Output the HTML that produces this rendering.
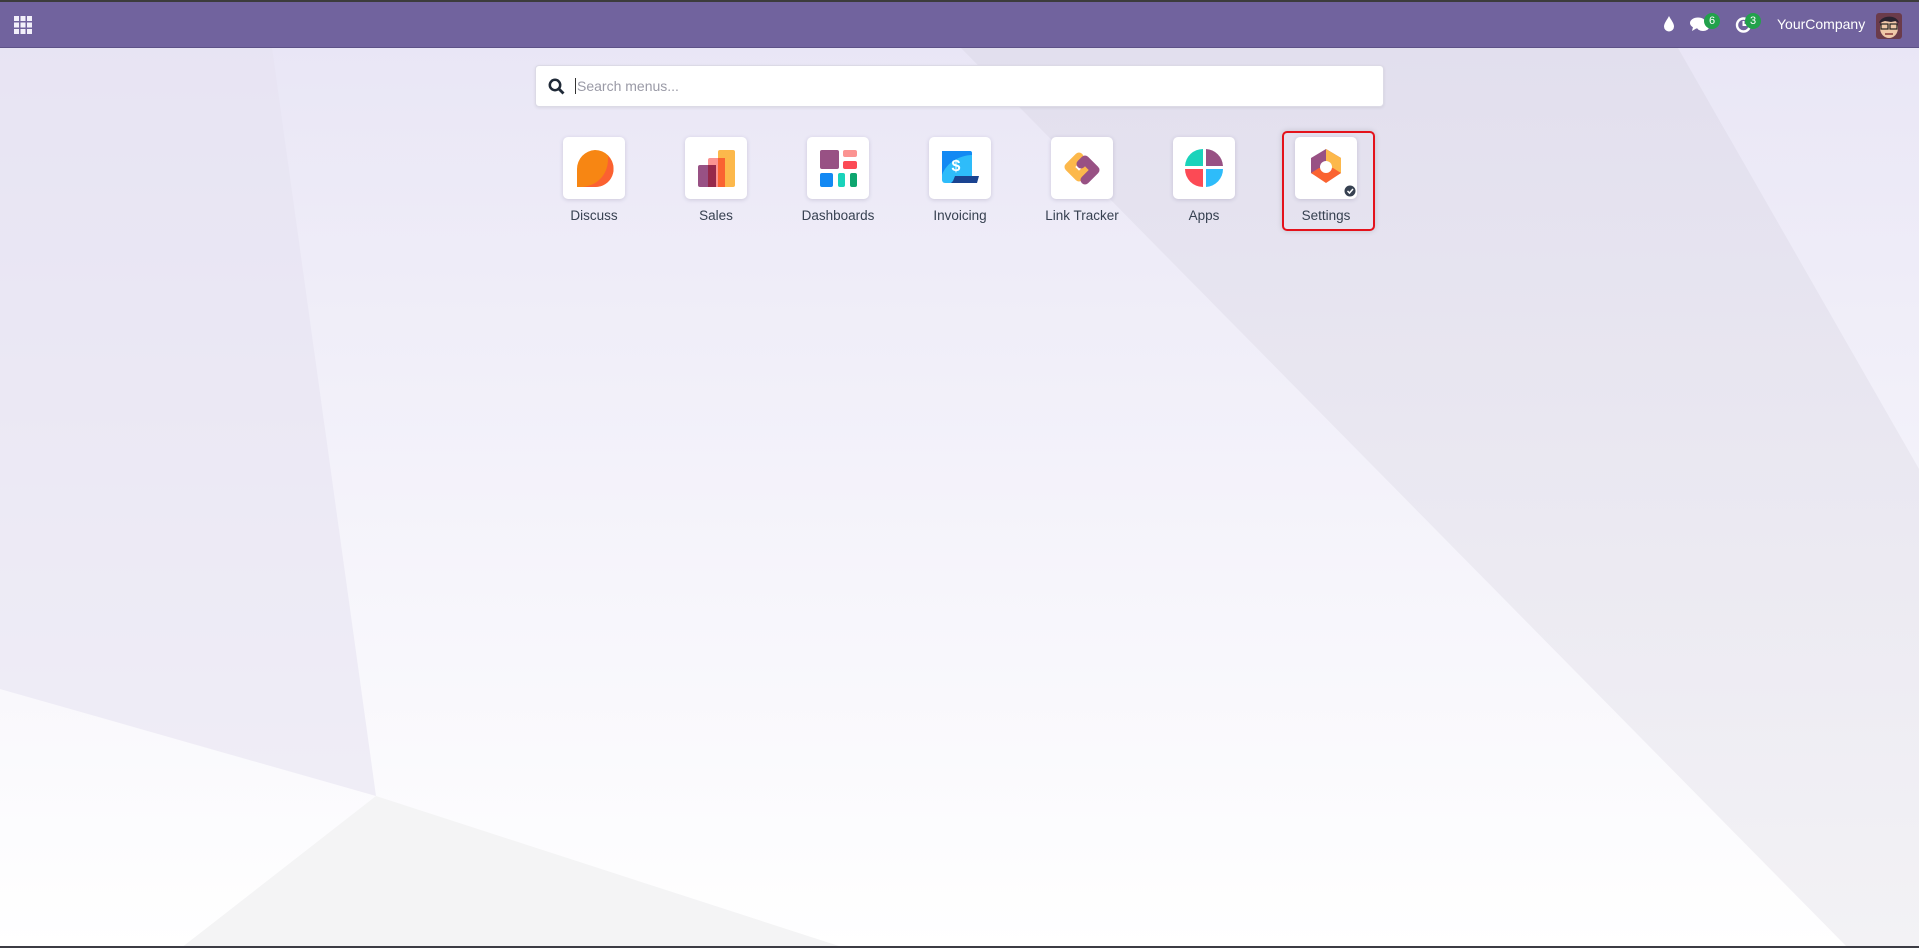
<!DOCTYPE html>
<html><head><meta charset="utf-8"><style>
*{margin:0;padding:0;box-sizing:border-box}
body{width:1919px;height:948px;overflow:hidden;font-family:"Liberation Sans",sans-serif;position:relative;background:#fff}
#bg{position:absolute;left:0;top:0}
.nav{position:absolute;left:0;top:0;width:1919px;height:48px;background:#71639e;border-top:2px solid #3c3c3c;border-bottom:1px solid #5d5287}
.search{position:absolute;left:535px;top:65px;width:849px;height:42px;background:#fff;border:1px solid #dcdae6;border-radius:4px;box-shadow:0 1px 3px rgba(0,0,0,.08)}
.search span{position:absolute;left:39px;top:12px;font-size:14px;color:#9a9aa6;border-left:1px solid #333;padding-left:1px}
.tile{position:absolute;top:137px;width:62px;height:62px;background:#fff;border-radius:5px;box-shadow:0 1px 4px rgba(60,50,100,.18)}
.lab{position:absolute;top:208px;width:122px;text-align:center;font-size:13.5px;color:#374151}
.bad{position:absolute;top:11px;height:16px;min-width:16px;border-radius:8px;background:#22a14b;color:#fff;font-size:11px;text-align:center;line-height:16px}
</style></head><body>
<svg id="bg" width="1919" height="948" viewBox="0 0 1919 948">
<defs><linearGradient id="g" x1="0" y1="0" x2="0" y2="1"><stop offset="0" stop-color="#e8e5f5"/><stop offset="1" stop-color="#ffffff"/></linearGradient>
<linearGradient id="g2" x1="0" y1="0" x2="0" y2="1"><stop offset="0" stop-color="#e2dfee"/><stop offset="1" stop-color="#f3f2f5"/></linearGradient></defs>
<rect width="1919" height="948" fill="url(#g)"/>
<polygon points="0,48 272,48 376,796 0,689" fill="#e5e2f1" opacity=".55"/>
<polygon points="961,48 1678,48 1919,469 1919,948 1848,948" fill="url(#g2)"/>
<polygon points="376,796 181,948 845,948" fill="#f4f4f5"/>
</svg>
<div class="nav">
<svg style="position:absolute;left:14px;top:14px" width="18" height="18" viewBox="0 0 18 18" fill="#f2f0fa"><rect x="0" y="0" width="5" height="5"/><rect x="6.5" y="0" width="5" height="5"/><rect x="13" y="0" width="5" height="5"/><rect x="0" y="6.5" width="5" height="5"/><rect x="6.5" y="6.5" width="5" height="5"/><rect x="13" y="6.5" width="5" height="5"/><rect x="0" y="13" width="5" height="5"/><rect x="6.5" y="13" width="5" height="5"/><rect x="13" y="13" width="5" height="5"/></svg>
<svg style="position:absolute;left:1663px;top:14px" width="12" height="16" viewBox="0 0 12 16"><path d="M6 0C4 4 1 7 1 10.5a5 5 0 0 0 10 0C11 7 8 4 6 0z" fill="#fff"/></svg>
<svg style="position:absolute;left:1690px;top:15px" width="20" height="16" viewBox="0 0 20 16"><ellipse cx="8" cy="6" rx="8" ry="5.5" fill="#fff"/><path d="M3 10l-1 4 5-3z" fill="#fff"/><ellipse cx="13" cy="10" rx="6" ry="4" fill="#fff"/></svg>
<div class="bad" style="left:1704px">6</div>
<svg style="position:absolute;left:1735px;top:14px" width="18" height="18" viewBox="0 0 18 18"><circle cx="8.5" cy="9" r="6.5" fill="none" stroke="#fff" stroke-width="2.4"/><path d="M8.5 5v4h3" stroke="#fff" stroke-width="2" fill="none"/></svg>
<div class="bad" style="left:1745px">3</div>
<div style="position:absolute;left:1777px;top:14px;color:#fff;font-size:14px">YourCompany</div>
<svg style="position:absolute;left:1876px;top:11px" width="26" height="26" viewBox="0 0 26 26"><rect width="26" height="26" rx="3" fill="#6b3b4a"/><ellipse cx="13" cy="15" rx="9" ry="10" fill="#f0c8a8"/><path d="M3 10c2-8 18-9 20 0l-3-2-5 1-6-1z" fill="#2b2330"/><rect x="5" y="11" width="7" height="5" fill="none" stroke="#222" stroke-width="1.2"/><rect x="14" y="11" width="7" height="5" fill="none" stroke="#222" stroke-width="1.2"/><path d="M9 21h8" stroke="#8a3b3b" stroke-width="1.5"/></svg>
</div>
<div class="search"><svg style="position:absolute;left:12px;top:12px" width="17" height="17" viewBox="0 0 17 17"><circle cx="7" cy="7" r="5.2" fill="none" stroke="#1f2937" stroke-width="2.5"/><path d="M11 11l4.5 4.5" stroke="#1f2937" stroke-width="2.8"/></svg><span>Search menus...</span></div>

<div style="position:absolute;left:1282px;top:131px;width:93px;height:100px;border:2px solid #e4121b;border-radius:5px;box-shadow:0 0 6px rgba(0,0,0,.15)"></div>

<div class="tile" style="left:563px"><svg width="62" height="62"><path d="M32 13a18 18 0 0 1 0 37H14V32a19 19 0 0 1 18-19z" fill="#f78613"/><path d="M45 19a18 18 0 0 1-13 31H20c16-2 26-14 25-31z" fill="#fb6131"/></svg></div>
<div class="lab" style="left:533px">Discuss</div>
<div class="tile" style="left:685px"><svg width="62" height="62"><rect x="33" y="13" width="17" height="37" rx="2" fill="#fcb84b"/><rect x="23" y="21" width="17" height="29" rx="2" fill="#fb9391"/><rect x="33" y="21" width="7" height="29" fill="#fa6331"/><rect x="13" y="28" width="18" height="22" rx="2" fill="#985184"/><rect x="23" y="28" width="8" height="22" fill="#96294a"/></svg></div>
<div class="lab" style="left:655px">Sales</div>
<div class="tile" style="left:807px"><svg width="62" height="62"><rect x="13" y="13" width="19" height="19" rx="2" fill="#985184"/><rect x="36" y="13" width="14" height="7" rx="2" fill="#fb9391"/><rect x="36" y="24" width="14" height="8" rx="2" fill="#fc4a55"/><rect x="13" y="36" width="13" height="14" rx="2" fill="#1389f3"/><rect x="31" y="36" width="7" height="14" rx="2" fill="#1ad3bb"/><rect x="43" y="36" width="7" height="14" rx="2" fill="#0da56e"/></svg></div>
<div class="lab" style="left:777px">Dashboards</div>
<div class="tile" style="left:929px"><svg width="62" height="62"><path d="M13 14h28a2 2 0 0 1 2 2v30H16a3 3 0 0 1-3-3z" fill="#2ebcfa"/><path d="M13 14h28c2 0 2 2 2 4-12 0-26 8-30 20z" fill="#1389f3"/><path d="M24 44l2-5h24l-2 7H22z" fill="#1a4390"/><text x="27" y="34" font-size="16" font-weight="bold" fill="#fff" text-anchor="middle" font-family="Liberation Sans">$</text></svg></div>
<div class="lab" style="left:899px">Invoicing</div>
<div class="tile" style="left:1051px"><svg width="62" height="62"><polyline points="28,20 18,30 28,40 34,34" fill="none" stroke="#fcb84b" stroke-width="9" stroke-linejoin="round" stroke-linecap="round"/><polyline points="30,27 34,23 44,33 34,43" fill="none" stroke="#985184" stroke-width="9" stroke-linejoin="round" stroke-linecap="round"/></svg></div>
<div class="lab" style="left:1021px">Link Tracker</div>
<div class="tile" style="left:1173px"><svg width="62" height="62"><path d="M30 12v17H12a18 18 0 0 1 18-17z" fill="#1ad3bb"/><path d="M33 12a18 18 0 0 1 17 17H33z" fill="#985184"/><path d="M12 32h18v18a18 18 0 0 1-18-18z" fill="#fc4a55"/><path d="M33 32h17a18 18 0 0 1-17 18z" fill="#2ebcfa"/></svg></div>
<div class="lab" style="left:1143px">Apps</div>
<div class="tile" style="left:1295px"><svg width="62" height="62"><path d="M31 12l15 9v15l-15 9-15-9V21z" fill="#985184"/><path d="M31 12l15 9v15l-9 5-6-12z" fill="#fcb84b"/><path d="M16 36l8-5h14l8 5-15 10z" fill="#fa6331"/><circle cx="31" cy="30" r="6" fill="#fff"/><circle cx="55" cy="54" r="7" fill="#fff"/><circle cx="55" cy="54" r="5.5" fill="#374151"/><path d="M52.5 54l2 2 3.5-4" stroke="#fff" stroke-width="1.5" fill="none"/></svg></div>
<div class="lab" style="left:1265px">Settings</div>
<div style="position:absolute;left:0;top:946px;width:1919px;height:2px;background:#3c3c44"></div>
</body></html>
